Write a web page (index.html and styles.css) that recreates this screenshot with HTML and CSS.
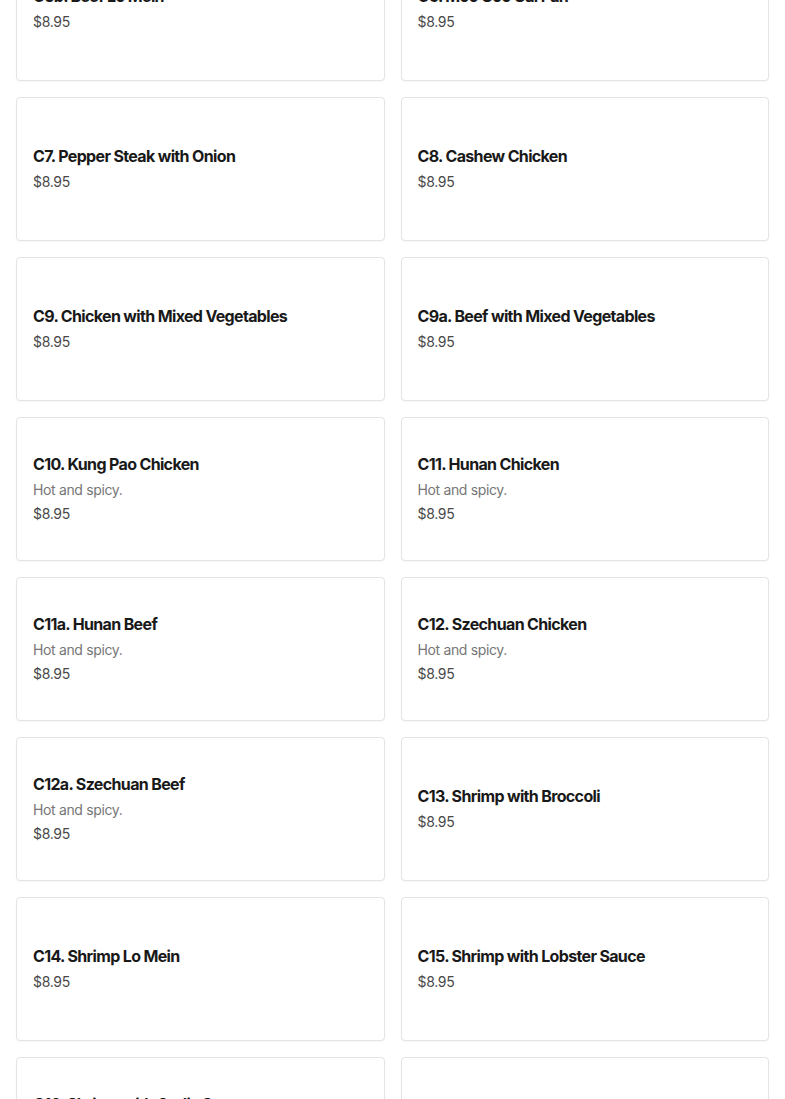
FILE: index.html
```html
<!DOCTYPE html>
<html lang="en">
<head>
<meta charset="utf-8">
<title>Menu</title>
<link rel="stylesheet" href="styles.css">
</head>
<body>
<main class="menu">
  <div class="grid">
    <article class="card"><div class="info"><h3 class="name">C5b. Beef Lo Mein</h3><p class="price">$8.95</p></div></article>
    <article class="card"><div class="info"><h3 class="name">C6. Moo Goo Gai Pan</h3><p class="price">$8.95</p></div></article>
    <article class="card"><div class="info"><h3 class="name">C7. Pepper Steak with Onion</h3><p class="price">$8.95</p></div></article>
    <article class="card"><div class="info"><h3 class="name">C8. Cashew Chicken</h3><p class="price">$8.95</p></div></article>
    <article class="card"><div class="info"><h3 class="name">C9. Chicken with Mixed Vegetables</h3><p class="price">$8.95</p></div></article>
    <article class="card"><div class="info"><h3 class="name">C9a. Beef with Mixed Vegetables</h3><p class="price">$8.95</p></div></article>
    <article class="card"><div class="info"><h3 class="name">C10. Kung Pao Chicken</h3><p class="desc">Hot and spicy.</p><p class="price">$8.95</p></div></article>
    <article class="card"><div class="info"><h3 class="name">C11. Hunan Chicken</h3><p class="desc">Hot and spicy.</p><p class="price">$8.95</p></div></article>
    <article class="card"><div class="info"><h3 class="name">C11a. Hunan Beef</h3><p class="desc">Hot and spicy.</p><p class="price">$8.95</p></div></article>
    <article class="card"><div class="info"><h3 class="name">C12. Szechuan Chicken</h3><p class="desc">Hot and spicy.</p><p class="price">$8.95</p></div></article>
    <article class="card"><div class="info"><h3 class="name">C12a. Szechuan Beef</h3><p class="desc">Hot and spicy.</p><p class="price">$8.95</p></div></article>
    <article class="card"><div class="info"><h3 class="name">C13. Shrimp with Broccoli</h3><p class="price">$8.95</p></div></article>
    <article class="card"><div class="info"><h3 class="name">C14. Shrimp Lo Mein</h3><p class="price">$8.95</p></div></article>
    <article class="card"><div class="info"><h3 class="name">C15. Shrimp with Lobster Sauce</h3><p class="price">$8.95</p></div></article>
    <article class="card"><div class="info"><h3 class="name">C16. Shrimp with Garlic Sauce</h3><p class="desc">Hot and spicy.</p><p class="price">$8.95</p></div></article>
    <article class="card"><div class="info"><h3 class="name">C17. Sweet and Sour Shrimp</h3><p class="price">$8.95</p></div></article>
  </div>
</main>
</body>
</html>
```
FILE: styles.css
```css
html, body {
  margin: 0;
  padding: 0;
  background: #ffffff;
}
body {
  font-family: Inter, "Noto Sans", "Liberation Sans", sans-serif;
  color: #191919;
  overflow: hidden;
}
.menu {
  padding: 0 16px;
}
.grid {
  display: grid;
  grid-template-columns: 1fr 1fr;
  gap: 16px;
  margin-top: -63px;
}
.card {
  box-sizing: border-box;
  height: 144px;
  border: 1px solid #e4e4e4;
  border-radius: 4px;
  box-shadow: 0 1px 2px rgba(0, 0, 0, 0.04);
  display: flex;
  align-items: center;
  padding: 0 16px;
  background: #fff;
}
.info {
  display: flex;
  flex-direction: column;
}
.name {
  margin: 0 0 4px;
  font-size: 16px;
  font-weight: 700;
  line-height: 22px;
  letter-spacing: -0.65px;
  color: #191919;
}
.desc {
  margin: 0 0 2px;
  font-size: 14px;
  line-height: 22px;
  letter-spacing: -0.35px;
  color: #767676;
}
.price {
  margin: 0;
  font-size: 14px;
  line-height: 22px;
  letter-spacing: -0.3px;
  color: #494949;
}
```
